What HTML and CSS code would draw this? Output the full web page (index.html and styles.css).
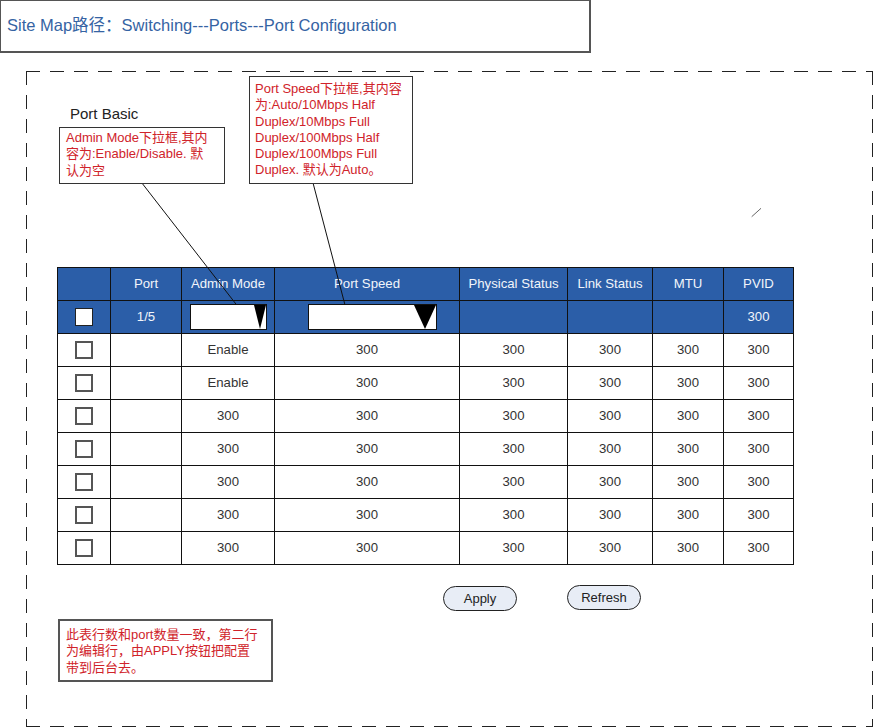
FILE: index.html
```html
<!DOCTYPE html>
<html lang="zh">
<head>
<meta charset="utf-8">
<title>Port Configuration</title>
<link rel="stylesheet" href="styles.css">
</head>
<body>
<div class="sitemap">Site Map路径：Switching---Ports---Port Configuration</div>
<div class="frame">
  <svg class="leaders" width="847" height="656" viewBox="0 0 847 656">
    <line x1="116.7" y1="113" x2="210.7" y2="234" stroke="#111" stroke-width="1"/>
    <line x1="287.3" y1="113" x2="319" y2="234" stroke="#111" stroke-width="1"/>
    <line x1="725.7" y1="145.7" x2="735" y2="137.3" stroke="#666" stroke-width="1"/>
  </svg>
  <div class="top-area">
    <div class="left-col">
      <div class="section-title">Port Basic</div>
      <div class="note note-admin">Admin Mode下拉框,其内<br>容为:Enable/Disable. 默<br>认为空</div>
    </div>
    <div class="note note-speed">Port Speed下拉框,其内容<br>为:Auto/10Mbps Half<br>Duplex/10Mbps Full<br>Duplex/100Mbps Half<br>Duplex/100Mbps Full<br>Duplex. 默认为Auto。</div>
  </div>
  <table class="ports">
    <colgroup>
      <col class="c1"><col class="c2"><col class="c3"><col class="c4"><col class="c5"><col class="c6"><col class="c7"><col class="c8">
    </colgroup>
    <thead>
      <tr class="blue">
        <th></th><th>Port</th><th>Admin Mode</th><th>Port Speed</th><th>Physical Status</th><th>Link Status</th><th>MTU</th><th>PVID</th>
      </tr>
    </thead>
    <tbody>
      <tr class="blue">
        <td class="chk-cell"><span class="chk chk-edit"></span></td>
        <td>1/5</td>
        <td class="sel-cell"><span class="select sel-admin"><span class="tri tri-sm"></span></span></td>
        <td class="sel-cell"><span class="select sel-speed"><span class="tri tri-lg"></span></span></td>
        <td></td><td></td><td></td><td>300</td>
      </tr>
      <tr><td class="chk-cell"><span class="chk"></span></td><td></td><td>Enable</td><td>300</td><td>300</td><td>300</td><td>300</td><td>300</td></tr>
      <tr><td class="chk-cell"><span class="chk"></span></td><td></td><td>Enable</td><td>300</td><td>300</td><td>300</td><td>300</td><td>300</td></tr>
      <tr><td class="chk-cell"><span class="chk"></span></td><td></td><td>300</td><td>300</td><td>300</td><td>300</td><td>300</td><td>300</td></tr>
      <tr><td class="chk-cell"><span class="chk"></span></td><td></td><td>300</td><td>300</td><td>300</td><td>300</td><td>300</td><td>300</td></tr>
      <tr><td class="chk-cell"><span class="chk"></span></td><td></td><td>300</td><td>300</td><td>300</td><td>300</td><td>300</td><td>300</td></tr>
      <tr><td class="chk-cell"><span class="chk"></span></td><td></td><td>300</td><td>300</td><td>300</td><td>300</td><td>300</td><td>300</td></tr>
      <tr><td class="chk-cell"><span class="chk"></span></td><td></td><td>300</td><td>300</td><td>300</td><td>300</td><td>300</td><td>300</td></tr>
    </tbody>
  </table>
  <div class="actions">
    <button class="btn btn-apply">Apply</button>
    <button class="btn btn-refresh">Refresh</button>
  </div>
  <div class="note note-bottom">此表行数和port数量一致，第二行<br>为编辑行，由APPLY按钮把配置<br>带到后台去。</div>
</div>
</body>
</html>
```
FILE: styles.css
```css
html, body {
  margin: 0;
  padding: 0;
  background: #fff;
}
body {
  font-family: "Liberation Sans", Arial, "Noto Sans CJK SC", sans-serif;
  width: 874px;
  height: 728px;
  overflow: hidden;
}
.sitemap {
  box-sizing: border-box;
  width: 591px;
  height: 53px;
  border: 1px solid #555;
  border-right-width: 2px;
  border-bottom-width: 2px;
  padding: 0 0 4px 6px;
  display: flex;
  align-items: center;
  font-size: 16.5px;
  color: #3563a3;
  white-space: nowrap;
}
.frame {
  position: relative;
  box-sizing: border-box;
  margin: 18px 0 0 26px;
  width: 847px;
  height: 656px;
  padding: 1px;
  background:
    repeating-linear-gradient(90deg, #222 0 14px, transparent 14px 24px) left top / 100% 1px no-repeat,
    repeating-linear-gradient(90deg, #222 0 14px, transparent 14px 24px) left bottom / 100% 1px no-repeat,
    repeating-linear-gradient(180deg, #222 0 14px, transparent 14px 24px) left top / 1px 100% no-repeat,
    repeating-linear-gradient(180deg, #222 0 14px, transparent 14px 24px) right top / 1px 100% no-repeat;
}
.leaders {
  position: absolute;
  left: 0;
  top: 0;
  z-index: 2;
  pointer-events: none;
}
.top-area {
  display: flex;
  align-items: flex-end;
  gap: 24px;
  padding: 4px 0 0 32px;
}
.left-col {
  display: flex;
  flex-direction: column;
}
.section-title {
  font-size: 15px;
  color: #222;
  margin: 0 0 5px 11px;
  line-height: 17px;
}
.note {
  box-sizing: border-box;
  border: 1px solid #333;
  background: #fff;
  color: #d0232a;
  font-size: 13px;
  line-height: 16.3px;
  white-space: nowrap;
}
.note-admin {
  width: 166px;
  height: 57px;
  padding: 2px 6px;
}
.note-speed {
  width: 164px;
  height: 108px;
  padding: 4px 5px;
}
.ports {
  margin: 83px 0 0 30px;
  border-collapse: collapse;
  table-layout: fixed;
  width: 737px;
  font-size: 13.2px;
  color: #333;
}
.c1 { width: 53px; }
.c2 { width: 71px; }
.c3 { width: 93px; }
.c4 { width: 185px; }
.c5 { width: 108px; }
.c6 { width: 85px; }
.c7 { width: 71px; }
.c8 { width: 70px; }
.ports th, .ports td {
  border: 1px solid #111;
  height: 30px;
  padding: 0 0 2px;
  text-align: center;
  vertical-align: middle;
  font-weight: normal;
}
.ports td.chk-cell, .ports td.sel-cell {
  padding: 0;
  height: 32px;
}
.ports tr.blue th, .ports tr.blue td {
  background: #2b5ea8;
  color: #f2f5fa;
}
.chk {
  display: inline-block;
  vertical-align: middle;
  box-sizing: border-box;
  width: 18px;
  height: 18px;
  border: 2px solid #555;
  background: #fff;
}
.chk-edit {
  border: 1px solid #222;
}
.ports td.sel-cell {
  text-align: left;
}
.select {
  box-sizing: border-box;
  display: flex;
  justify-content: flex-end;
  height: 26px;
  border: 1px solid #111;
  background: #fff;
}
.sel-admin {
  width: 77px;
  margin-left: 8px;
}
.sel-speed {
  width: 129px;
  margin-left: 33px;
}
.tri {
  width: 0;
  height: 0;
  border-top: 24px solid #000;
}
.tri-sm {
  border-left: 6px solid transparent;
  border-right: 6px solid transparent;
}
.tri-lg {
  border-left: 11px solid transparent;
  border-right: 11px solid transparent;
}
.actions {
  display: flex;
  align-items: flex-start;
  gap: 50px;
  margin: 21px 0 0 416px;
}
.btn {
  box-sizing: border-box;
  width: 74px;
  height: 25px;
  border: 1px solid #222;
  border-radius: 13px;
  background: #e8edf6;
  font-family: inherit;
  font-size: 13px;
  color: #222;
  padding: 0;
}
.btn-refresh {
  margin-top: -1px;
}
.note-bottom {
  width: 215px;
  height: 63px;
  margin: 8px 0 0 31px;
  padding: 6px 6px;
  border: 2px solid #555;
}
```
